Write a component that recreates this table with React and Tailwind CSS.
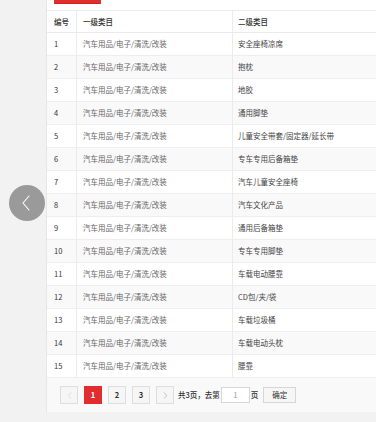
import { ChevronLeft, ChevronRight } from 'lucide-react'

const rows = [
  '安全座椅凉席',
  '抱枕',
  '地胶',
  '通用脚垫',
  '儿童安全带套/固定器/延长带',
  '专车专用后备箱垫',
  '汽车儿童安全座椅',
  '汽车文化产品',
  '通用后备箱垫',
  '专车专用脚垫',
  '车载电动腰靠',
  'CD包/夹/袋',
  '车载垃圾桶',
  '车载电动头枕',
  '腰靠',
]

const font = { fontFamily: '"Noto Sans CJK SC", "Noto Sans", sans-serif' }

function App() {
  return (
    <div
      className="relative flex flex-col h-[422px] w-[376px] overflow-hidden bg-[#f2f2f2] text-[7.5px] leading-none"
      style={font}
    >
      <div className="flex h-[412px]">
        <div className="w-[46px] shrink-0" />
        <div className="flex-1 flex flex-col border-l border-[#e6e6e6] bg-[#f9f9f9] overflow-hidden">
          {/* top button (cut off) */}
          <div className="bg-white h-[10px] shrink-0">
            <div className="ml-[7px] w-[47px] h-[4px] bg-[#e22d2f] rounded-b-[1px] border-b border-[#d02222]" />
          </div>

          {/* table */}
          <div className="w-[420px] bg-white">
            <div className="flex h-[23px] border-y border-[#ebebeb] bg-white text-[#333] font-medium">
              <div className="w-[29px] shrink-0 flex items-center pl-[7px]">编号</div>
              <div className="w-[156px] shrink-0 flex items-center pl-[6px] border-l border-[#ebebeb]">一级类目</div>
              <div className="flex-1 flex items-center pl-[5px] border-l border-[#ebebeb]">二级类目</div>
            </div>
            {rows.map((name, i) => (
              <div
                key={i}
                className={`flex h-[23px] border-b border-[#eeeeee] ${i % 2 === 1 ? 'bg-[#f9f9f9]' : 'bg-white'}`}
              >
                <div className="w-[29px] shrink-0 flex items-center pl-[7px] text-[#333]">{i + 1}</div>
                <div className="w-[156px] shrink-0 flex items-center pl-[6px] border-l border-[#ebebeb] text-[#666]">
                  汽车用品/电子/清洗/改装
                </div>
                <div className="flex-1 flex items-center pl-[5px] border-l border-[#ebebeb] text-[#444]">{name}</div>
              </div>
            ))}
          </div>

          {/* pagination */}
          <div className="flex items-center pt-[8px] pl-[13px]">
            <button className="w-[18px] h-[18px] flex items-center justify-center border border-[#dedede] bg-[#f6f6f6] text-[#c8c8c8]">
              <ChevronLeft size={11} strokeWidth={1.3} />
            </button>
            <button className="ml-[6px] w-[18px] h-[18px] flex items-center justify-center border border-[#e22d2f] bg-[#e22d2f] text-white font-bold">
              1
            </button>
            <button className="ml-[6px] w-[18px] h-[18px] flex items-center justify-center border border-[#dedede] bg-[#f6f6f6] text-[#333] font-bold">
              2
            </button>
            <button className="ml-[6px] w-[18px] h-[18px] flex items-center justify-center border border-[#dedede] bg-[#f6f6f6] text-[#333] font-bold">
              3
            </button>
            <button className="ml-[6px] w-[18px] h-[18px] flex items-center justify-center border border-[#dedede] bg-[#f6f6f6] text-[#999]">
              <ChevronRight size={11} strokeWidth={1.3} />
            </button>
            <span className="ml-[4px] text-[#333] font-medium">共3页，去第</span>
            <div className="ml-[1px] w-[29px] h-[16px] flex items-center justify-center border border-[#d6d6d6] bg-white text-[#999]">
              1
            </div>
            <span className="ml-[1px] text-[#333] font-medium">页</span>
            <button className="ml-[5px] w-[33px] h-[16px] flex items-center justify-center border border-[#d6d6d6] bg-[#f6f6f6] text-[#333]">
              确定
            </button>
          </div>
        </div>
      </div>

      {/* floating back arrow */}
      <div className="absolute left-[9px] top-[185px] w-[36px] h-[36px] rounded-full bg-[#9a9a9a] flex items-center justify-center">
        <svg width="10" height="16" viewBox="0 0 10 16" fill="none" className="-ml-[2px]">
          <path d="M8 1 L2 8 L8 15" stroke="white" strokeWidth="1.1" strokeLinecap="round" strokeLinejoin="round" />
        </svg>
      </div>
    </div>
  )
}

export default App
